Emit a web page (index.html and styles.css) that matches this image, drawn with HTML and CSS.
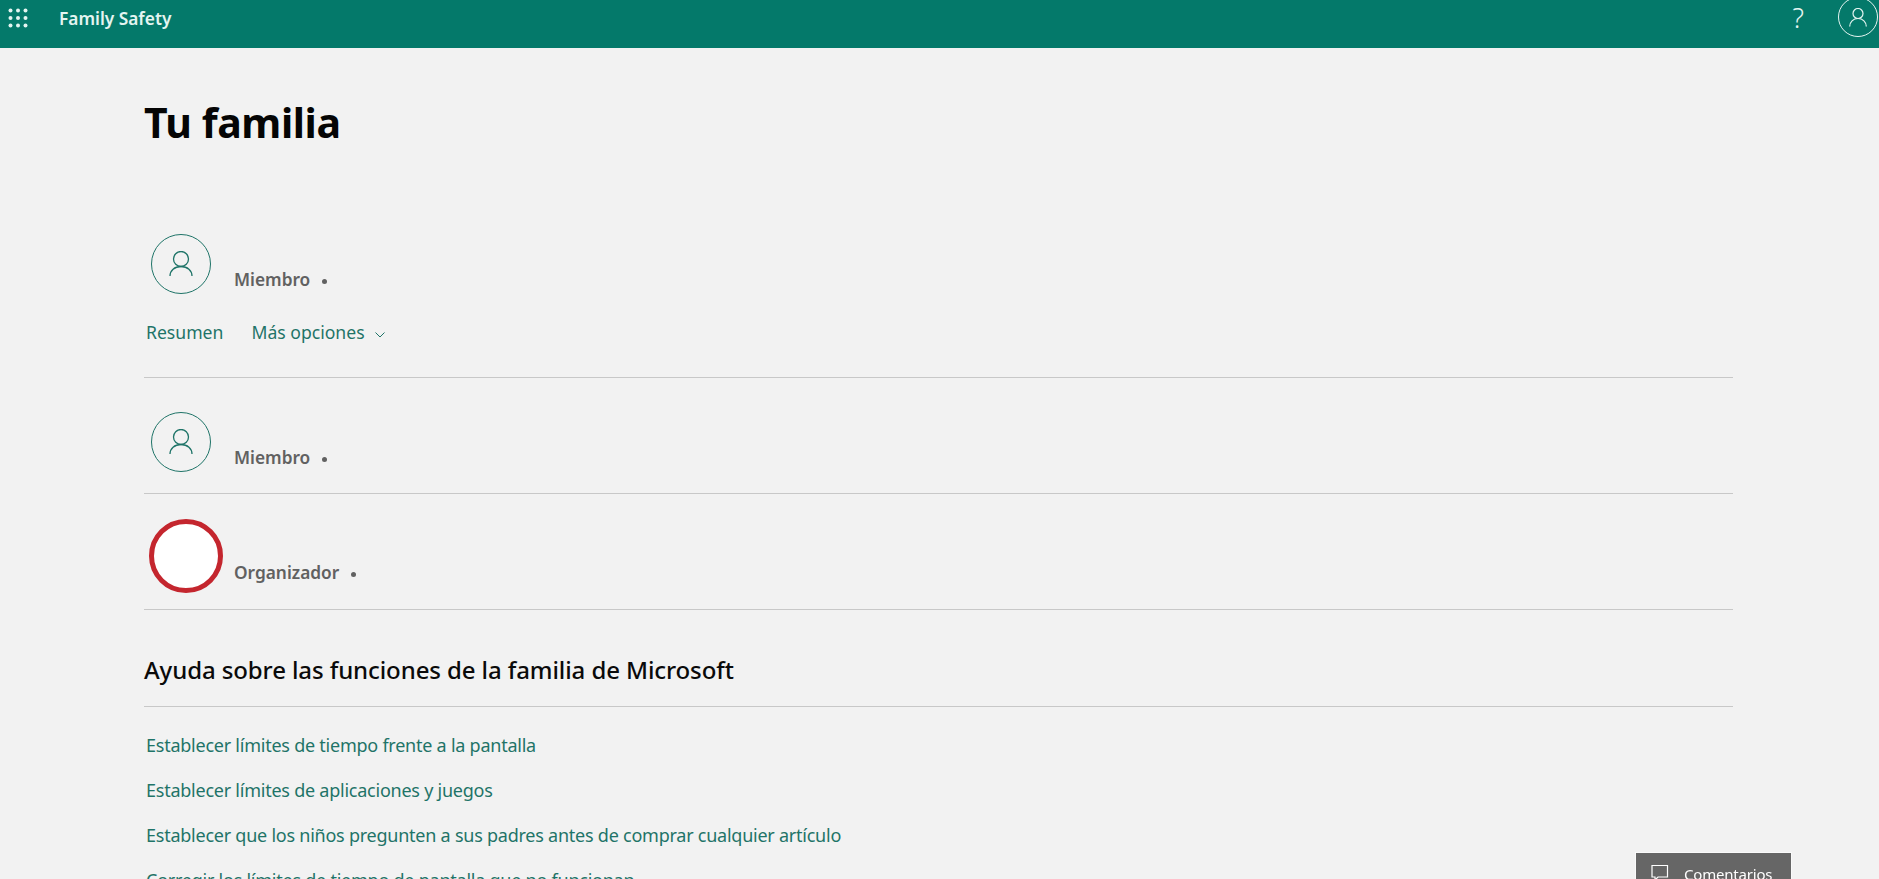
FILE: index.html
```html
<!DOCTYPE html>
<html lang="es">
<head>
    <meta charset="UTF-8">
    <meta name="viewport" content="width=device-width, initial-scale=1.0">
    <title>Family Safety</title>
    <link rel="stylesheet" href="styles.css">
</head>
<body>
    <header class="top-bar">
        <div class="top-left">
            <svg class="waffle" width="20" height="20" viewBox="0 0 20 20" fill="currentColor">
                <circle cx="2.5" cy="2.5" r="2"/><circle cx="10" cy="2.5" r="2"/><circle cx="17.5" cy="2.5" r="2"/>
                <circle cx="2.5" cy="10" r="2"/><circle cx="10" cy="10" r="2"/><circle cx="17.5" cy="10" r="2"/>
                <circle cx="2.5" cy="17.5" r="2"/><circle cx="10" cy="17.5" r="2"/><circle cx="17.5" cy="17.5" r="2"/>
            </svg>
            <span class="app-name">Family Safety</span>
        </div>
        <div class="top-right">
            <span class="help">?</span>
            <div class="me">
                <svg width="18" height="19" viewBox="0 0 18 19" fill="none" stroke="currentColor" stroke-width="1.2">
                    <circle cx="9" cy="5.500" r="5"/>
                    <path d="M.7 18.500c0-4.500 3.500-8 8.300-8s8.300 3.500 8.300 8"/>
                </svg>
            </div>
        </div>
    </header>

    <main class="content">
        <h1>Tu familia</h1>

        <section class="member member-open">
            <div class="member-row">
                <div class="avatar">
                    <svg width="24" height="26" viewBox="0 0 24 26" fill="none" stroke="currentColor" stroke-width="1.3">
                        <circle cx="12" cy="8" r="7.500"/>
                        <path d="M1 25c0-5.500 4.500-9.500 11-9.500s11 4 11 9.500"/>
                    </svg>
                </div>
                <div class="role">Miembro <span class="dot"></span></div>
            </div>
            <nav class="member-links">
                <a href="#">Resumen</a>
                <a href="#">Más opciones
                    <svg class="chevron" width="10" height="6" viewBox="0 0 10 6" fill="none" stroke="currentColor" stroke-width="1"><path d="M.5.500 5 5 9.500.500"/></svg>
                </a>
            </nav>
        </section>

        <section class="member">
            <div class="member-row">
                <div class="avatar">
                    <svg width="24" height="26" viewBox="0 0 24 26" fill="none" stroke="currentColor" stroke-width="1.3">
                        <circle cx="12" cy="8" r="7.500"/>
                        <path d="M1 25c0-5.500 4.500-9.500 11-9.500s11 4 11 9.500"/>
                    </svg>
                </div>
                <div class="role">Miembro <span class="dot"></span></div>
            </div>
        </section>

        <section class="member member-owner">
            <div class="member-row">
                <div class="avatar-red"></div>
                <div class="role">Organizador <span class="dot"></span></div>
            </div>
        </section>

        <h2>Ayuda sobre las funciones de la familia de Microsoft</h2>
        <ul class="help-links">
            <li><a href="#">Establecer límites de tiempo frente a la pantalla</a></li>
            <li><a href="#">Establecer límites de aplicaciones y juegos</a></li>
            <li><a href="#">Establecer que los niños pregunten a sus padres antes de comprar cualquier artículo</a></li>
            <li><a href="#">Corregir los límites de tiempo de pantalla que no funcionan</a></li>
        </ul>
    </main>

    <button class="feedback">
        <svg width="18" height="18" viewBox="0 0 18 18" fill="none" stroke="currentColor" stroke-width="1.200"><path d="M1 1.500h15.500v11.500H7l-3 3v-3H1z"/></svg>
        Comentarios
    </button>
</body>
</html>
```

FILE: styles.css
```css
html, body {
    height: 100%;
    overflow: hidden;
}

body {
    margin: 0;
    font-family: "Noto Sans", "Open Sans", sans-serif;
    background-color: #f2f2f2;
    color: #000;
}

a {
    color: #1f7468;
    text-decoration: none;
}

.top-bar {
    height: 48px;
    background-color: #04796a;
    color: #e4f5f1;
    display: flex;
    justify-content: space-between;
    align-items: flex-start;
    overflow: hidden;
}

.top-left {
    height: 36px;
    display: flex;
    align-items: center;
    padding-left: 8px;
}

.app-name {
    margin-left: 31px;
    font-size: 17.3px;
    font-weight: 600;
}

.top-right {
    height: 34px;
    display: flex;
    align-items: center;
}

.help {
    font-size: 27px;
    margin-right: 34px;
    font-weight: 300;
}

.me {
    flex: none;
    width: 38px;
    height: 38px;
    border: 1px solid currentColor;
    border-radius: 50%;
    margin-right: 1px;
    display: flex;
    align-items: center;
    justify-content: center;
}

.content {
    padding: 0 146px 0 144px;
}

h1 {
    margin: 0;
    padding-top: 49px;
    font-size: 41px;
    line-height: 50px;
    font-weight: 700;
    letter-spacing: -0.4px;
    color: #050505;
}

.member {
    border-bottom: 1px solid #c8c8c8;
}

.member-open {
    margin-top: 87px;
    height: 143px;
}

.member-row {
    display: flex;
    align-items: flex-end;
    padding-left: 7px;
}

.member + .member .member-row {
    padding-top: 34px;
}

.member + .member {
    height: 115px;
}

.avatar {
    width: 58px;
    height: 58px;
    border: 1px solid #1f7468;
    border-radius: 50%;
    color: #1f7468;
    display: flex;
    align-items: center;
    justify-content: center;
}

.role {
    margin-left: 23px;
    margin-bottom: 2px;
    font-size: 17.3px;
    line-height: 24px;
    font-weight: 600;
    color: #616161;
}

.dot {
    display: inline-block;
    width: 5px;
    height: 5px;
    margin-left: 7px;
    margin-bottom: 2px;
    border-radius: 50%;
    background-color: #616161;
}

.member-links {
    display: flex;
    gap: 28px;
    margin-top: 26px;
    padding-left: 2px;
    font-size: 17.6px;
    line-height: 24px;
}

.chevron {
    margin-left: 6px;
    vertical-align: 1px;
}

.member + .member-owner .member-row {
    padding: 25px 0 0 5px;
}

.avatar-red {
    width: 64px;
    height: 64px;
    border: 5px solid #c4262e;
    border-radius: 50%;
    background-color: #fff;
}

.member-owner .role {
    margin-left: 11px;
    margin-bottom: 8px;
}

h2 {
    margin: 0;
    padding: 45px 0 21px;
    font-size: 24px;
    line-height: 30px;
    font-weight: 500;
    letter-spacing: -0.1px;
    color: #0a0a0a;
    border-bottom: 1px solid #c8c8c8;
}

.help-links {
    list-style: none;
    margin: 0;
    padding: 26px 0 0 2px;
    font-size: 18px;
    line-height: 24px;
    letter-spacing: -0.24px;
}

.help-links li {
    margin-bottom: 21px;
}

.feedback {
    position: fixed;
    left: 1636px;
    top: 853px;
    width: 155px;
    height: 50px;
    padding: 11px 0 0 15px;
    display: flex;
    align-items: flex-start;
    gap: 15px;
    border: none;
    outline: 1px solid #fafafa;
    background-color: #666;
    color: #fff;
    font-family: inherit;
    font-size: 15px;
    letter-spacing: -0.2px;
}
```
